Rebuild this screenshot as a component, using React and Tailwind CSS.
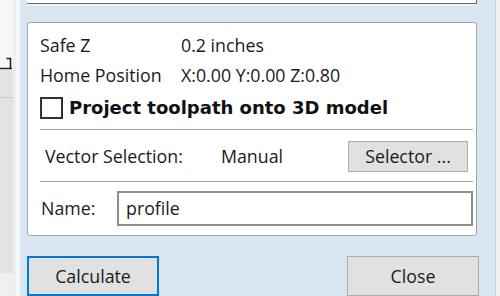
export default function App() {
  const font = { fontFamily: '"Open Sans", "Noto Sans", sans-serif' };
  return (
    <div className="flex h-[296px] w-[500px] overflow-hidden bg-[#dae5f2] text-[17.8px] text-[#1b1b1b]" style={font}>
      {/* left strip from the neighbouring pane */}
      <div className="flex w-[13px] flex-col">
        <div className="h-[57px] bg-[#f7f7f7]" />
        <div className="h-[13px] bg-[#f7f7f7]">
          <svg width="13" height="13" viewBox="0 0 13 13">
            <path d="M0 11.5H12M10.5 11V1.5H6.5" stroke="#222" strokeWidth="1.6" fill="none" />
          </svg>
        </div>
        <div className="h-[28px] border-b border-[#c9c9c9] bg-[#e3e3e3]" />
        <div className="h-[175px] bg-[#e3e3e3]" />
        <div className="flex-1 bg-[#f0f0f0]" />
      </div>
      <div className="w-[3px] bg-[#eeeeee]" />
      <div className="w-[4px] bg-[#f4f7fa]" />

      {/* main dialog area */}
      <div className="flex w-[475px] flex-col pl-[7px]">
        <div className="h-[4px] w-[450px] border-b border-r border-[#6a6a6a] bg-white" />
        <div className="h-[2px] w-[450px] bg-[#eef2f7]" />

        <div className="mt-[16px] flex h-[215px] w-[450px] flex-col rounded-[3px] border border-[#a3a3a3] bg-white pl-[12px] pr-[3px] pt-[7px]">
          <div className="flex h-[30px] items-center">
            <span className="w-[141px]">Safe Z</span>
            <span>0.2 inches</span>
          </div>
          <div className="flex h-[30px] items-center">
            <span className="w-[141px]">Home Position</span>
            <span>X:0.00 Y:0.00 Z:0.80</span>
          </div>
          <div className="mt-[3px] flex h-[30px] items-center gap-[6px]">
            <div className="h-[22px] w-[23px] shrink-0 border-2 border-[#333333] bg-white" />
            <span className="whitespace-nowrap text-[18px] font-bold text-[#111111]" style={{ fontFamily: '"DejaVu Sans", sans-serif' }}>
              Project toolpath onto 3D model
            </span>
          </div>
          <div className="mt-[6px] h-px bg-[#a8a8a8]" />
          <div className="mt-[11px] flex h-[31px] items-center">
            <span className="ml-[5px] w-[176px]">Vector Selection:</span>
            <span className="w-[127px]">Manual</span>
            <div className="flex h-[31px] w-[120px] items-center justify-center border border-[#adadad] bg-[#e1e1e1]">
              Selector ...
            </div>
          </div>
          <div className="mt-[9px] h-px bg-[#a8a8a8]" />
          <div className="mt-[9px] flex h-[35px] items-center">
            <span className="ml-[1px] w-[76px]">Name:</span>
            <div className="flex h-[35px] flex-1 items-center border-2 border-[#8e8e8e] bg-white pl-[7px]">
              profile
            </div>
          </div>
        </div>

        <div className="mt-[20px] flex w-[452px] justify-between">
          <div className="flex h-[40px] w-[132px] items-center justify-center border-2 border-[#0078d7] bg-[#e1e1e1]">
            Calculate
          </div>
          <div className="flex h-[40px] w-[132px] items-center justify-center border border-[#adadad] bg-[#e1e1e1]">
            Close
          </div>
        </div>
      </div>

      <div className="flex-1 border-l border-[#c8d2dd] bg-[#f0f0f0]" />
    </div>
  );
}
